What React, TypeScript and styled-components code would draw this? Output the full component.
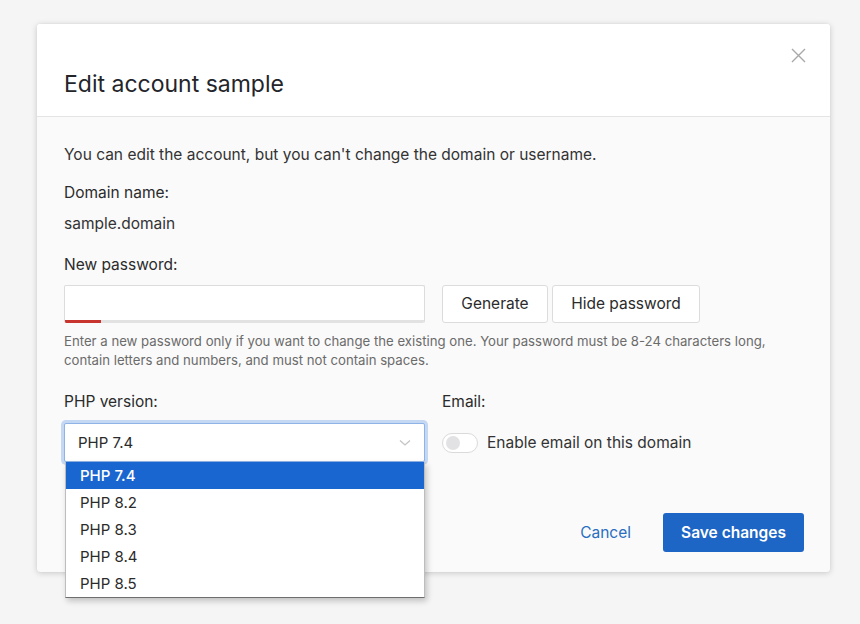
import React from "react";
import styled, { createGlobalStyle } from "styled-components";

const Global = createGlobalStyle`
  html, body { margin: 0; padding: 0; background: #f5f5f5; }
  body { font-family: Inter, "Noto Sans", "Liberation Sans", sans-serif; color: #2b2b2b; }
  * { box-sizing: border-box; }
`;

const Page = styled.div`
  width: 860px;
  height: 624px;
  padding: 24px 30px 0 37px;
  overflow: hidden;
`;

const Dialog = styled.div`
  position: relative;
  width: 793px;
  background: #fafafa;
  border-radius: 3px;
  box-shadow: 0 1px 6px rgba(0, 0, 0, 0.18), 0 0 1px rgba(0, 0, 0, 0.12);
`;

const Header = styled.div`
  background: #fff;
  border-bottom: 1px solid #e4e4e4;
  padding: 45px 27px 17px;
  border-radius: 3px 3px 0 0;
`;

const Title = styled.h1`
  margin: 0;
  font-size: 23px;
  line-height: 30px;
  font-weight: 400;
  color: #23252a;
`;

const CloseButton = styled.button`
  position: absolute;
  top: 22px;
  right: 23px;
  width: 18px;
  height: 18px;
  padding: 0;
  border: 0;
  background: none;
  display: flex;
  align-items: center;
  justify-content: center;
`;

const Body = styled.div`
  padding: 27px 26px 20px 27px;
`;

const Intro = styled.p`
  margin: 0;
  font-size: 15.5px;
  line-height: 22px;
  color: #333;
`;

const Label = styled.div<{ $mt: number }>`
  margin-top: ${(p) => p.$mt}px;
  font-size: 15.5px;
  line-height: 22px;
  color: #2b2b2b;
`;

const Value = styled.div`
  margin-top: 9px;
  font-size: 15.5px;
  line-height: 22px;
  color: #333;
`;

const PasswordRow = styled.div`
  margin-top: 9px;
  display: flex;
  align-items: stretch;
  height: 38px;
`;

const PasswordBox = styled.div`
  position: relative;
  width: 361px;
  margin-right: 17px;
  background: #fff;
  border: 1px solid #dcdcdc;
  border-bottom: 0;
  border-radius: 2px;
  overflow: hidden;
`;

const PasswordInput = styled.input`
  width: 100%;
  height: 34px;
  border: 0;
  outline: none;
  background: transparent;
  padding: 0 12px;
  font: inherit;
`;

const Meter = styled.div`
  position: absolute;
  left: 0;
  right: 0;
  bottom: 0;
  height: 3px;
  background: #e2e2e2;
`;

const MeterFill = styled.div`
  height: 100%;
  background: #c8352f;
`;

const SecondaryButton = styled.button<{ $w: number }>`
  width: ${(p) => p.$w}px;
  margin-right: 4px;
  padding: 0 0 2px;
  background: #fff;
  border: 1px solid #dcdcdc;
  border-radius: 3px;
  font-family: inherit;
  font-size: 15.5px;
  color: #2b2b2b;
`;

const Help = styled.p`
  margin: 9px 0 0;
  font-size: 13.2px;
  line-height: 19px;
  color: #6b6b6b;
`;

const Columns = styled.div`
  margin-top: 21px;
  display: grid;
  grid-template-columns: 361px 1fr;
  column-gap: 17px;
`;

const Column = styled.div`
  display: flex;
  flex-direction: column;
`;

const ColLabel = styled.div`
  font-size: 15.5px;
  line-height: 22px;
  color: #2b2b2b;
`;

const SelectWrap = styled.div`
  position: relative;
  margin-top: 10px;
`;

const SelectBox = styled.div`
  height: 39px;
  background: #fff;
  border: 1px solid #8fb3e6;
  border-radius: 2px;
  box-shadow: 0 0 0 3px #c4d8f3;
  display: flex;
  align-items: center;
  justify-content: space-between;
  padding: 0 13px 0 13px;
  font-size: 15px;
  color: #2b2b2b;
`;

const Options = styled.ul`
  position: absolute;
  top: 39px;
  left: 1px;
  width: 360px;
  margin: 0;
  padding: 0;
  list-style: none;
  background: #fff;
  border: 1px solid #bdbdbd;
  border-top: 0;
  border-bottom: 1px solid #6e6e6e;
  box-shadow: 2px 3px 6px rgba(0, 0, 0, 0.22);
  z-index: 2;
`;

const Option = styled.li<{ $active?: boolean }>`
  height: 27px;
  line-height: 27px;
  padding: 0 14px;
  font-size: 15px;
  color: ${(p) => (p.$active ? "#fff" : "#2b2b2b")};
  background: ${(p) => (p.$active ? "#1a66d0" : "transparent")};
  font-weight: ${(p) => (p.$active ? 500 : 400)};
`;

const ToggleRow = styled.label`
  margin-top: 10px;
  height: 39px;
  display: flex;
  align-items: center;
  gap: 9px;
  font-size: 15.5px;
  color: #333;
`;

const Toggle = styled.span`
  width: 36px;
  height: 20px;
  border: 1px solid #dadada;
  border-radius: 10px;
  background: #fff;
  display: flex;
  align-items: center;
  padding-left: 3px;
`;

const Knob = styled.span`
  width: 14px;
  height: 14px;
  border-radius: 50%;
  background: #e2e2e4;
`;

const Footer = styled.div`
  margin-top: 51px;
  display: flex;
  justify-content: flex-end;
  align-items: center;
  gap: 32px;
`;

const LinkButton = styled.button`
  border: 0;
  background: none;
  padding: 0;
  font-family: inherit;
  font-size: 15.5px;
  color: #2a6ec0;
`;

const PrimaryButton = styled.button`
  width: 141px;
  height: 39px;
  border: 0;
  border-radius: 3px;
  background: #1d66c6;
  color: #fff;
  font-family: inherit;
  font-size: 15.5px;
  font-weight: 600;
`;

const versions = ["PHP 7.4", "PHP 8.2", "PHP 8.3", "PHP 8.4", "PHP 8.5"];

export default function App() {
  return (
    <Page>
      <Global />
      <Dialog>
        <Header>
          <Title>Edit account sample</Title>
        </Header>
        <CloseButton aria-label="Close">
          <svg width="15" height="15" viewBox="0 0 15 15">
            <path d="M1 1L14 14M14 1L1 14" stroke="#a8a8a8" strokeWidth="1.4" fill="none" />
          </svg>
        </CloseButton>
        <Body>
          <Intro>You can edit the account, but you can't change the domain or username.</Intro>
          <Label $mt={16}>Domain name:</Label>
          <Value>sample.domain</Value>
          <Label $mt={19}>New password:</Label>
          <PasswordRow>
            <PasswordBox>
              <PasswordInput type="text" />
              <Meter>
                <MeterFill style={{ width: "10%" }} />
              </Meter>
            </PasswordBox>
            <SecondaryButton $w={106}>Generate</SecondaryButton>
            <SecondaryButton $w={148}>Hide password</SecondaryButton>
          </PasswordRow>
          <Help>
            Enter a new password only if you want to change the existing one. Your password must be 8-24 characters long,
            contain letters and numbers, and must not contain spaces.
          </Help>
          <Columns>
            <Column>
              <ColLabel>PHP version:</ColLabel>
              <SelectWrap>
                <SelectBox>
                  <span>PHP 7.4</span>
                  <svg width="12" height="8" viewBox="0 0 12 8">
                    <path d="M1 1.5L6 6L11 1.5" stroke="#c4c4c4" strokeWidth="1.3" fill="none" />
                  </svg>
                </SelectBox>
                <Options>
                  {versions.map((v, i) => (
                    <Option key={v} $active={i === 0}>
                      {v}
                    </Option>
                  ))}
                </Options>
              </SelectWrap>
            </Column>
            <Column>
              <ColLabel>Email:</ColLabel>
              <ToggleRow>
                <Toggle>
                  <Knob />
                </Toggle>
                Enable email on this domain
              </ToggleRow>
            </Column>
          </Columns>
          <Footer>
            <LinkButton>Cancel</LinkButton>
            <PrimaryButton>Save changes</PrimaryButton>
          </Footer>
        </Body>
      </Dialog>
    </Page>
  );
}
